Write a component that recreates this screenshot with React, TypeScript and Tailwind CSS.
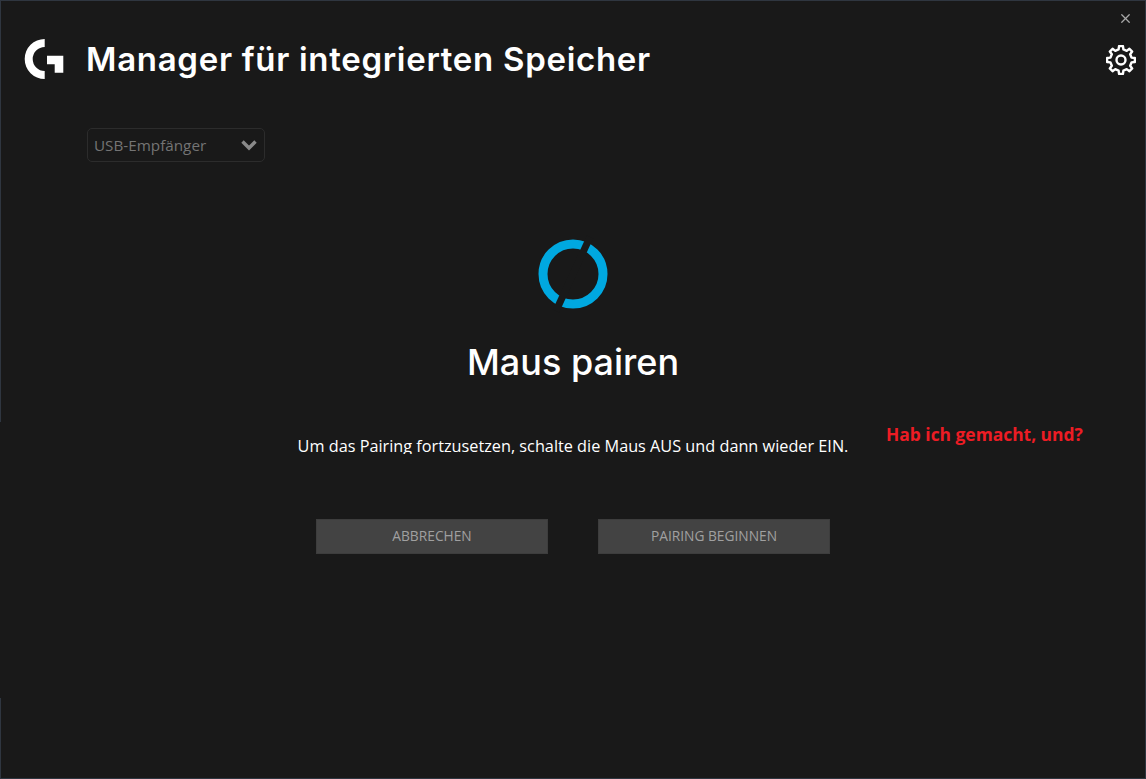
import React from 'react';
import { X } from 'lucide-react';

function GLogo() {
  return (
    <svg width="40" height="42" viewBox="0 0 40 42" fill="#fff" className="shrink-0 mb-[2px]">
      <path d="M20.7 1 A20 20 0 0 0 20.7 41 L20.7 33 A12 12 0 0 1 20.7 9 Z" />
      <path d="M23 17.7 H39.3 V34.7 H30.7 V26.3 H23 Z" />
    </svg>
  );
}

// eight teeth, top tooth on the vertical axis
function gearPath() {
  const pts: string[] = [];
  const at = (deg: number, r: number) => {
    const a = ((deg - 90) * Math.PI) / 180;
    return `${(15 + r * Math.cos(a)).toFixed(2)} ${(15 + r * Math.sin(a)).toFixed(2)}`;
  };
  for (let i = 0; i < 8; i++) {
    const c = i * 45;
    pts.push(at(c - 13, 10.8), at(c - 8, 14), at(c + 8, 14), at(c + 13, 10.8));
  }
  return `M${pts.join(' L')} Z`;
}

function GearIcon() {
  return (
    <svg width="30" height="30" viewBox="0 0 30 30" fill="none" stroke="#fff" strokeWidth="2.4" strokeLinejoin="round" className="shrink-0">
      <path d={gearPath()} />
      <circle cx="15" cy="15" r="4.5" />
    </svg>
  );
}

function Spinner() {
  return (
    <svg width="80" height="80" viewBox="0 0 80 80" fill="none">
      <circle cx="40" cy="40" r="30" stroke="#00a8e0" strokeWidth="9" />
      <line x1="57" y1="3" x2="23" y2="77" stroke="#191919" strokeWidth="7" />
    </svg>
  );
}

function ActionButton({ label }: { label: string }) {
  return (
    <button className="w-[232px] h-[35px] bg-[#434343] border border-[#3d3d3d] text-[#a0a0a0] text-[13.75px] font-medium font-['Open_Sans','Liberation_Sans',sans-serif] flex items-center justify-center">
      {label}
    </button>
  );
}

export default function App() {
  return (
    <div className="relative w-[1146px] h-[779px] flex bg-[#191919] overflow-hidden">
      {/* left window edge is broken up in the original shot */}
      <div className="w-px h-full flex flex-col shrink-0">
        <div className="h-[422px] bg-[#2f3640]" />
        <div className="h-[276px]" />
        <div className="flex-1 bg-[#2f3640]" />
      </div>

      <div className="flex-1 flex flex-col border-t border-r border-b border-[#2f3640]">
        <div className="h-[28px] flex justify-end items-start pt-[10px] pr-[12px]">
          <X size={15} color="#a8a8a8" strokeWidth={2} />
        </div>

        <div className="h-[62px] flex items-center pl-[23px] pr-[9px]">
          <GLogo />
          <h1 className="ml-[22px] flex-1 text-white text-[33px] font-semibold tracking-[0.7px] whitespace-nowrap font-['Inter',sans-serif]">
            Manager für integrierten Speicher
          </h1>
          <GearIcon />
        </div>

        <div className="pl-[86px] mt-[37px]">
          <div className="w-[178px] h-[34px] border border-[#2c2c2c] rounded-[5px] flex items-center justify-between pl-[6px] pr-[7px]">
            <span className="text-[#747474] text-[15.25px] font-['Open_Sans',sans-serif]">USB-Empfänger</span>
            <svg width="16" height="12" viewBox="0 0 16 12" fill="none" stroke="#8a8a8a" strokeWidth="3.4">
              <path d="M1.5 2.5 L8 9 L14.5 2.5" />
            </svg>
          </div>
        </div>

        <div className="flex justify-center mt-[72px] pr-[1px]">
          <Spinner />
        </div>

        <h2 className="mt-[26px] text-center text-white text-[36px] leading-[44px] font-medium font-['Inter',sans-serif]">
          Maus pairen
        </h2>

        <div className="mt-[51px] flex justify-center">
          {/* descenders are cut off in the reference */}
          <p className="h-[19px] overflow-hidden text-white text-[16.25px] leading-[22px] font-['Open_Sans',sans-serif]">
            Um das Pairing fortzusetzen, schalte die Maus AUS und dann wieder EIN.
          </p>
        </div>

        <div className="mt-[65px] flex justify-center gap-[50px]">
          <ActionButton label="ABBRECHEN" />
          <ActionButton label="PAIRING BEGINNEN" />
        </div>
      </div>

      <span className="absolute left-[886px] top-[422px] text-[#ed1c24] text-[17.4px] leading-[24px] font-bold font-['Open_Sans',sans-serif]">
        Hab ich gemacht, und?
      </span>
    </div>
  );
}
